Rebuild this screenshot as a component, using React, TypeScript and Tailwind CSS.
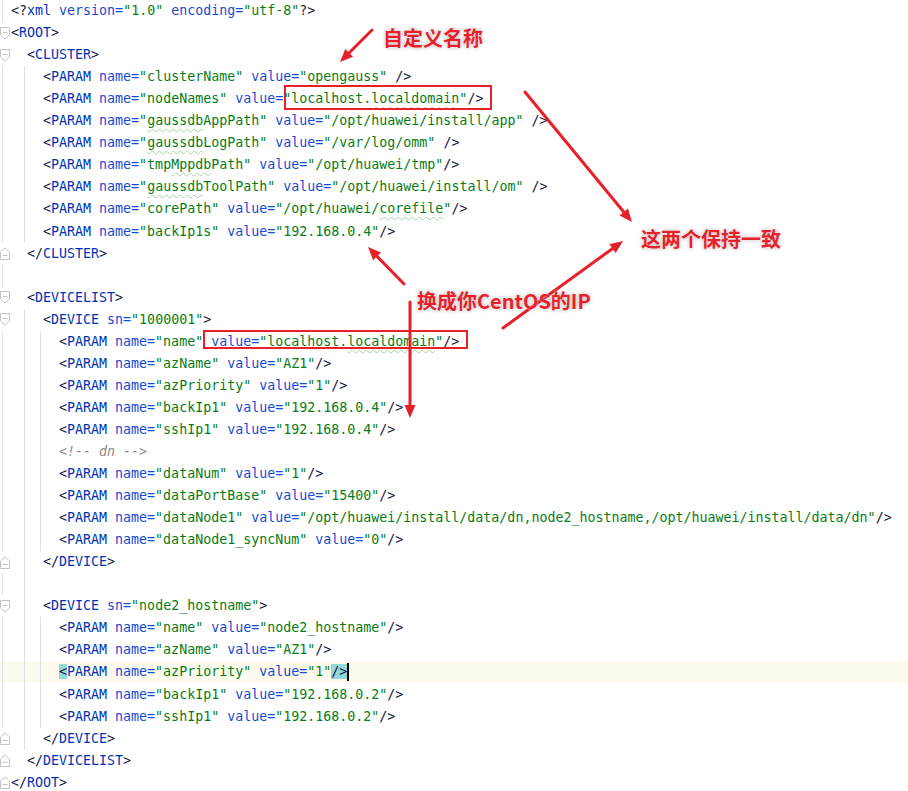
import React from "react";

type Line = { src: string; d: number; fold?: "open" | "close"; cur?: boolean };

const RED = "#e8202a";

// ~word~ marks a spell-check squiggle inside a value
const lines: Line[] = [
  { src: '<?xml version="1.0" encoding="utf-8"?>', d: 0 },
  { src: "<ROOT>", d: 0, fold: "open" },
  { src: "<CLUSTER>", d: 1, fold: "open" },
  { src: '<PARAM name="clusterName" value="opengauss" />', d: 2 },
  { src: '<PARAM name="nodeNames" value="localhost.~localdomain~"/>', d: 2 },
  { src: '<PARAM name="~gaussdb~AppPath" value="/opt/huawei/install/app" />', d: 2 },
  { src: '<PARAM name="~gaussdb~LogPath" value="/var/log/omm" />', d: 2 },
  { src: '<PARAM name="tmp~Mppdb~Path" value="/opt/huawei/tmp"/>', d: 2 },
  { src: '<PARAM name="~gaussdb~ToolPath" value="/opt/huawei/install/om" />', d: 2 },
  { src: '<PARAM name="corePath" value="/opt/huawei/~corefile~"/>', d: 2 },
  { src: '<PARAM name="backIp1s" value="192.168.0.4"/>', d: 2 },
  { src: "</CLUSTER>", d: 1, fold: "close" },
  { src: "", d: 1 },
  { src: "<DEVICELIST>", d: 1, fold: "open" },
  { src: '<DEVICE sn="1000001">', d: 2, fold: "open" },
  { src: '<PARAM name="name" value="localhost.~localdomain~"/>', d: 3 },
  { src: '<PARAM name="azName" value="AZ1"/>', d: 3 },
  { src: '<PARAM name="azPriority" value="1"/>', d: 3 },
  { src: '<PARAM name="backIp1" value="192.168.0.4"/>', d: 3 },
  { src: '<PARAM name="sshIp1" value="192.168.0.4"/>', d: 3 },
  { src: "<!-- dn -->", d: 3 },
  { src: '<PARAM name="dataNum" value="1"/>', d: 3 },
  { src: '<PARAM name="dataPortBase" value="15400"/>', d: 3 },
  { src: '<PARAM name="dataNode1" value="/opt/huawei/install/data/dn,node2_hostname,/opt/huawei/install/data/dn"/>', d: 3 },
  { src: '<PARAM name="dataNode1_syncNum" value="0"/>', d: 3 },
  { src: "</DEVICE>", d: 2, fold: "close" },
  { src: "", d: 2 },
  { src: '<DEVICE sn="node2_hostname">', d: 2, fold: "open" },
  { src: '<PARAM name="name" value="node2_hostname"/>', d: 3 },
  { src: '<PARAM name="azName" value="AZ1"/>', d: 3 },
  { src: '<PARAM name="azPriority" value="1"/>', d: 3, cur: true },
  { src: '<PARAM name="backIp1" value="192.168.0.2"/>', d: 3 },
  { src: '<PARAM name="sshIp1" value="192.168.0.2"/>', d: 3 },
  { src: "</DEVICE>", d: 2, fold: "close" },
  { src: "</DEVICELIST>", d: 1, fold: "close" },
  { src: "</ROOT>", d: 0, fold: "close" },
];

function Value({ text }: { text: string }) {
  const parts = text.split("~");
  return (
    <span className="text-[#067d17]">
      {parts.map((p, i) =>
        i % 2 ? (
          <span key={i} className="underline decoration-wavy decoration-[#a6d4a6] decoration-1 underline-offset-[3px]">
            {p}
          </span>
        ) : (
          <span key={i}>{p}</span>
        )
      )}
    </span>
  );
}

function Code({ src, cur }: { src: string; cur?: boolean }) {
  const toks = src.match(/<!--.*?-->|<\?|<\/|<|\?>|\/>|>|"[^"]*"|[A-Za-z_]\w*|=|\s+/g) ?? [];
  let afterOpen = false;
  return (
    <span className="whitespace-pre">
      {toks.map((t, i) => {
        if (t.startsWith("<!--")) return <span key={i} className="italic text-[#8c8c8c]">{t}</span>;
        if (t === "<" || t === "</" || t === "<?") {
          afterOpen = true;
          return (
            <span key={i} className={"text-[#151540] " + (cur && i === 0 ? "bg-[#93d9d9]" : "")}>
              {t}
            </span>
          );
        }
        if (t === ">" || t === "/>" || t === "?>")
          return (
            <span key={i} className={"text-[#151540] " + (cur && t === "/>" ? "bg-[#93d9d9]" : "")}>
              {t}
            </span>
          );
        if (t.startsWith('"')) return <Value key={i} text={t} />;
        if (/^\s+$/.test(t)) return <span key={i}>{t}</span>;
        if (t === "=") return <span key={i} className="text-[#174ad4]">=</span>;
        if (afterOpen) {
          afterOpen = false;
          return <span key={i} className="text-[#0033b3]">{t}</span>;
        }
        return <span key={i} className="text-[#174ad4]">{t}</span>;
      })}
      {cur && <span className="inline-block w-[2px] h-[18px] bg-black align-middle" />}
    </span>
  );
}

function FoldMark({ kind }: { kind: "open" | "close" }) {
  return (
    <svg width="11" height="13" viewBox="0 0 11 13" className="shrink-0">
      {kind === "open" ? (
        <path d="M0.5 0.5 H9.5 V8 L5 12 L0.5 8 Z" fill="#fff" stroke="#c4c4c4" />
      ) : (
        <path d="M0.5 12.5 H9.5 V5 L5 1 L0.5 5 Z" fill="#fff" stroke="#c4c4c4" />
      )}
      <path d={kind === "open" ? "M2.5 5.5 H7.5" : "M2.5 8.5 H7.5"} stroke="#c4c4c4" />
    </svg>
  );
}

function Arrow({ x1, y1, x2, y2 }: { x1: number; y1: number; x2: number; y2: number }) {
  const dx = x2 - x1;
  const dy = y2 - y1;
  const len = Math.hypot(dx, dy);
  const ux = dx / len;
  const uy = dy / len;
  const hl = 13;
  const hw = 5.5;
  const bx = x2 - ux * hl;
  const by = y2 - uy * hl;
  const pts = `${x2},${y2} ${bx - uy * hw},${by + ux * hw} ${bx + uy * hw},${by - ux * hw}`;
  return (
    <g>
      <line x1={x1} y1={y1} x2={bx + ux * 2} y2={by + uy * 2} stroke={RED} strokeWidth={3} strokeLinecap="round" />
      <polygon points={pts} fill={RED} />
    </g>
  );
}

const note =
  "absolute text-[20px] leading-[20px] font-bold text-[#e8202a] font-['Noto_Sans_CJK_SC',sans-serif] whitespace-nowrap [text-shadow:0_0_2px_#fff,0_0_4px_rgba(0,0,0,0.35)]";

export default function App() {
  return (
    <div className="relative w-[908px] h-[791px] overflow-hidden bg-white">
      {/* editor lines */}
      <div className="font-['DejaVu_Sans_Mono',monospace] text-[13.3px]">
        {lines.map((ln, i) => {
          const guides = Math.max(ln.d - 1, 0);
          return (
            <div key={i} className={"flex h-[22.06px] items-stretch " + (ln.cur ? "bg-[#fcfaed]" : "")}>
              <div className="w-[11px] shrink-0 flex items-center">
                {ln.fold ? <FoldMark kind={ln.fold} /> : <span className="ml-[2px] w-px h-full bg-[#e2e2e2]" />}
              </div>
              {Array.from({ length: ln.d }).map((_, k) => (
                <div key={k} className="w-[16px] shrink-0 flex">
                  <span className="w-[13px]" />
                  {k < guides && <span className="w-px h-full bg-[#e0e0e0]" />}
                </div>
              ))}
              <div className="flex items-center">
                <Code src={ln.src} cur={ln.cur} />
              </div>
            </div>
          );
        })}
      </div>

      {/* red annotations */}
      <div className="absolute left-[284px] top-[85px] w-[208px] h-[25px] border-2 border-[#e8202a]" />
      <div className="absolute left-[203px] top-[330px] w-[265px] h-[19px] border-2 border-[#e8202a]" />

      <svg className="absolute inset-0 pointer-events-none" width="908" height="791">
        <Arrow x1={372} y1={30} x2={340} y2={62} />
        <Arrow x1={525} y1={92} x2={632} y2={222} />
        <Arrow x1={404} y1={284} x2={368} y2={247} />
        <Arrow x1={503} y1={328} x2={623} y2={241} />
        <Arrow x1={410} y1={302} x2={410} y2={418} />
      </svg>

      <div className={note + " left-[383px] top-[28px]"}>自定义名称</div>
      <div className={note + " left-[641px] top-[229px]"}>这两个保持一致</div>
      <div className={note + " left-[417px] top-[291px]"}>换成你CentOS的IP</div>
    </div>
  );
}
